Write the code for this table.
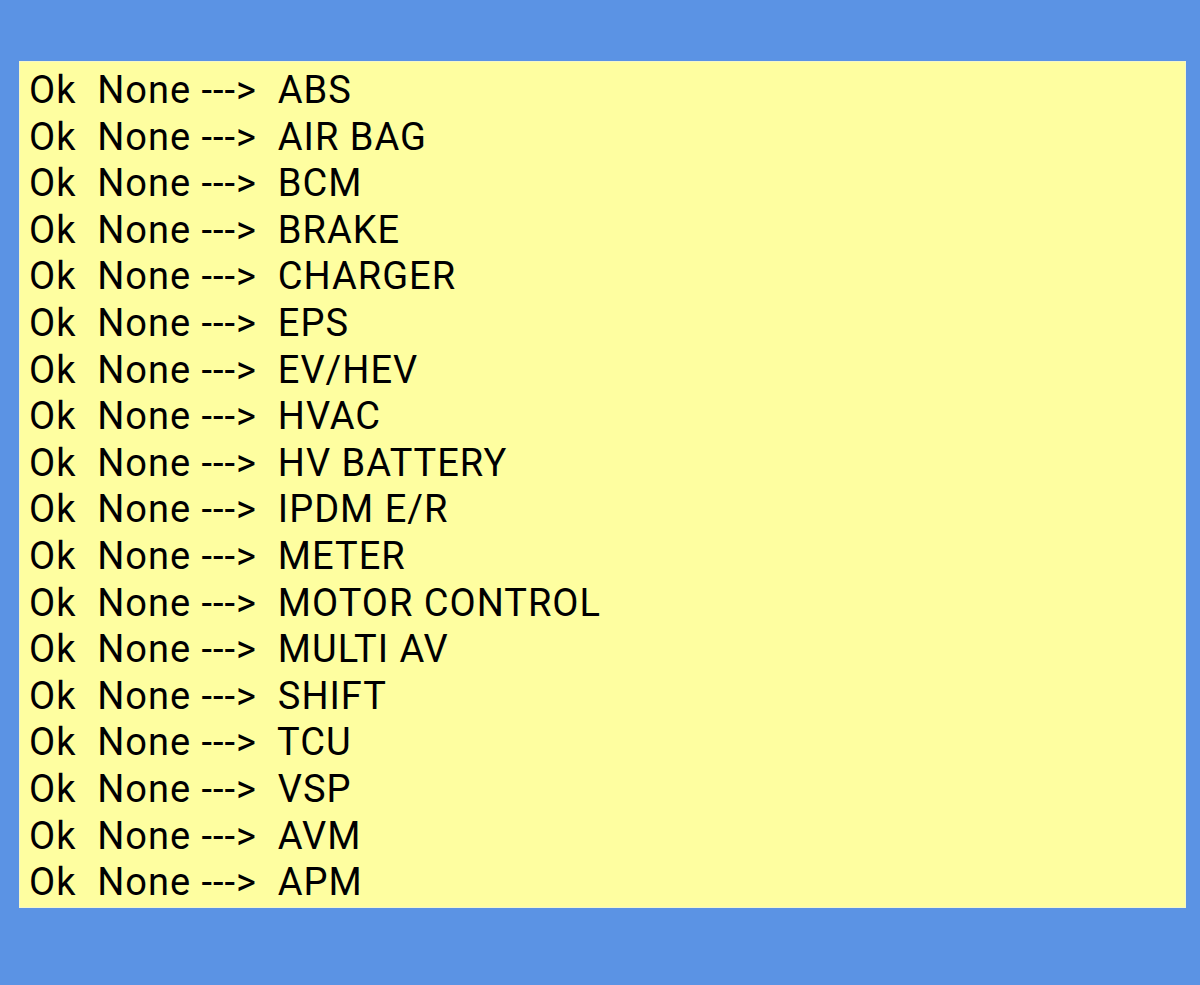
const modules = [
  'ABS', 'AIR BAG', 'BCM', 'BRAKE', 'CHARGER', 'EPS', 'EV/HEV', 'HVAC', 'HV BATTERY',
  'IPDM E/R', 'METER', 'MOTOR CONTROL', 'MULTI AV', 'SHIFT', 'TCU', 'VSP', 'AVM', 'APM',
];

export default function App() {
  return (
    <div className="h-[985px] w-full bg-[#5b93e4] pt-[61px] pl-[19px] pr-[14px]">
      <div className="h-[847px] bg-[#fefea0] border border-[#f4f6c8] pl-[9px] pt-[5px] font-['Roboto',sans-serif] text-[38px] leading-[46.6px] tracking-[1px] text-black">
        {modules.map((m) => (
          <div key={m} className="whitespace-pre">{`Ok  None --->  ${m}`}</div>
        ))}
      </div>
    </div>
  );
}
